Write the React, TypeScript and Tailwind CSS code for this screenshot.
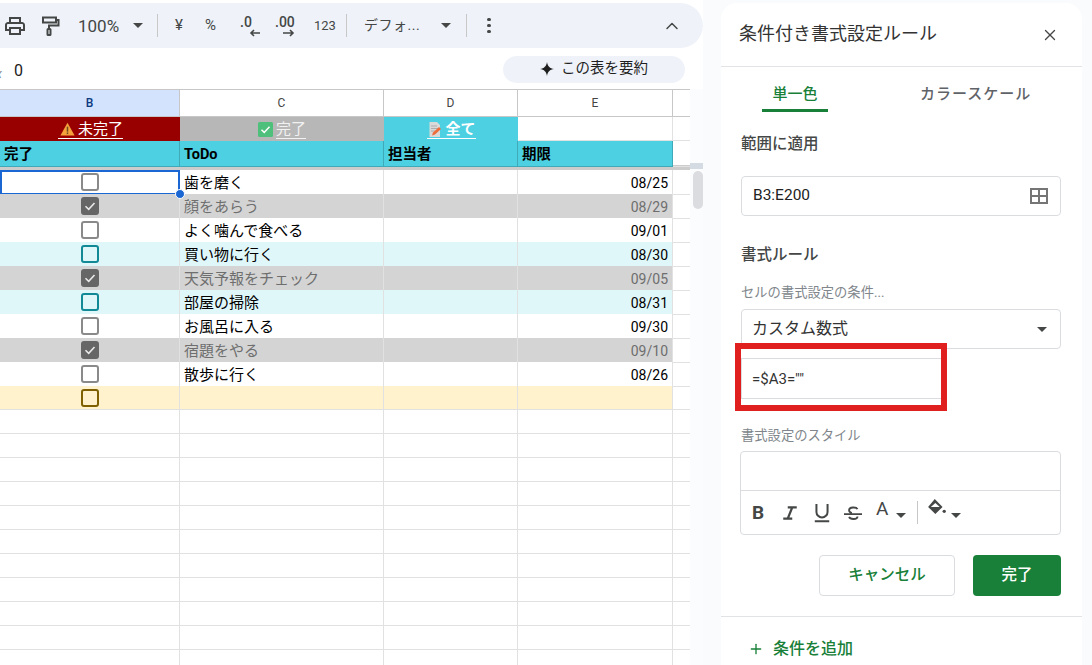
import { ChevronUp, Plus, X } from "lucide-react";

const FONT = "font-['Roboto','Noto_Sans_CJK_JP',sans-serif]";

type Tone = "white" | "done" | "soon" | "empty";

interface Task {
  text: string;
  date: string;
  tone: Tone;
}

const tasks: Task[] = [
  { text: "歯を磨く", date: "08/25", tone: "white" },
  { text: "顔をあらう", date: "08/29", tone: "done" },
  { text: "よく噛んで食べる", date: "09/01", tone: "white" },
  { text: "買い物に行く", date: "08/30", tone: "soon" },
  { text: "天気予報をチェック", date: "09/05", tone: "done" },
  { text: "部屋の掃除", date: "08/31", tone: "soon" },
  { text: "お風呂に入る", date: "09/30", tone: "white" },
  { text: "宿題をやる", date: "09/10", tone: "done" },
  { text: "散歩に行く", date: "08/26", tone: "white" },
  { text: "", date: "", tone: "empty" },
];

const toneBg: Record<Tone, string> = {
  white: "bg-white text-black",
  done: "bg-[#d4d4d4] text-[#6e6e6e]",
  soon: "bg-[#e0f7fa] text-black",
  empty: "bg-[#fff2cc] text-black",
};

const toneBox: Record<Tone, string> = {
  white: "border-[#8a8a8a]",
  done: "border-[#666666] bg-[#666666]",
  soon: "border-[#128a96]",
  empty: "border-[#7f6000]",
};

const Caret = ({ className = "" }: { className?: string }) => (
  <span className={`inline-block h-0 w-0 border-x-[5px] border-t-[5px] border-x-transparent border-t-[#444746] ${className}`} />
);

const Sep = ({ className = "" }: { className?: string }) => <span className={`h-[23px] w-px shrink-0 bg-[#c7c7c7] ${className}`} />;

const TaskBox = ({ tone }: { tone: Tone }) => (
  <span className={`flex h-[18px] w-[18px] items-center justify-center rounded-[3px] border-2 ${toneBox[tone]}`}>
    {tone === "done" && (
      <svg viewBox="0 0 14 14" className="h-[14px] w-[14px]" fill="none" stroke="#e8e8e8" strokeWidth="1.6">
        <path d="M2.5 7.2 5.7 10.3 11.5 4" />
      </svg>
    )}
  </span>
);

const Warning = () => (
  <svg viewBox="0 0 16 15" className="h-[14px] w-[15px] shrink-0">
    <path d="M8 .8 15.6 14.4H.4z" fill="#f5a13c" />
    <rect x="7.2" y="5" width="1.6" height="5.4" fill="#6b4a22" />
    <rect x="7.2" y="11.2" width="1.6" height="1.8" fill="#6b4a22" />
  </svg>
);

const CheckMark = () => (
  <svg viewBox="0 0 15 15" className="h-[15px] w-[15px] shrink-0">
    <rect width="15" height="15" rx="1.5" fill="#4fbf7c" />
    <path d="M3.5 7.8 6.2 10.4 11.5 4.8" fill="none" stroke="#fff" strokeWidth="1.5" />
  </svg>
);

const Memo = () => (
  <svg viewBox="0 0 15 15" className="h-[15px] w-[15px] shrink-0">
    <path d="M2.5 0H10l3 3v12H2.5z" fill="#d9d9d9" />
    <path d="M4 4h6M4 6.5h7M4 9h4" stroke="#a8a8a8" strokeWidth="0.9" />
    <path d="M5 13.5 6 10.5 12 5l2 2-6 5.5z" fill="#ee6c3a" />
  </svg>
);

const Toolbar = () => (
  <div className="flex h-[45px] items-center rounded-r-[24px] bg-[#eff3f9] text-[#444746]">
    <svg viewBox="0 0 24 24" className="ml-[3px] h-6 w-6 shrink-0" fill="#444746">
      <path d="M19 8h-1V3H6v5H5c-1.66 0-3 1.34-3 3v6h4v4h12v-4h4v-6c0-1.66-1.34-3-3-3zM8 5h8v3H8V5zm8 12v2H8v-4h8v2zm2-2v-2H6v2H4v-4c0-.55.45-1 1-1h14c.55 0 1 .45 1 1v4h-2z" />
    </svg>
    <svg viewBox="0 0 24 24" className="ml-[11px] h-6 w-6 shrink-0" fill="none" stroke="#444746" strokeWidth="2">
      <path d="M5 3.5h13v5H5zM18 6h2.5v5.5H11V15" />
      <rect x="9.5" y="15" width="3" height="6" rx="0.6" />
    </svg>
    <span className="ml-[16px] mt-[2px] w-[44px] shrink-0 text-[17px]">100%</span>
    <Caret className="ml-[11px]" />
    <Sep className="ml-[14px]" />
    <span className="ml-[17px] w-[10px] text-[15px]">¥</span>
    <span className="ml-[20px] w-[16px] text-[15px]">%</span>
    <svg viewBox="0 -6 24 32" className="ml-[18px] h-[32px] w-[24px] shrink-0">
      <text x="1" y="11" fontSize="14" fontWeight="500" fill="#444746">.0</text>
      <path d="M21 17h-9M15 14l-3 3 3 3" fill="none" stroke="#444746" strokeWidth="1.6" />
    </svg>
    <svg viewBox="0 -6 26 32" className="ml-[12px] h-[32px] w-[26px] shrink-0">
      <text x="0" y="11" fontSize="14" fontWeight="500" fill="#444746">.00</text>
      <path d="M8 17h10M15 14l3 3-3 3" fill="none" stroke="#444746" strokeWidth="1.6" />
    </svg>
    <span className="ml-[13px] w-[20px] text-[13px]">123</span>
    <Sep className="ml-[12px]" />
    <span className="ml-[17px] w-[62px] text-[14px] tracking-[0.5px]">デフォ...</span>
    <Caret className="ml-[15px]" />
    <Sep className="ml-[15px]" />
    <span className="ml-[20px] flex w-[4px] flex-col gap-[2.5px]">
      <i className="h-[3.5px] w-[3.5px] rounded-full bg-[#444746]" />
      <i className="h-[3.5px] w-[3.5px] rounded-full bg-[#444746]" />
      <i className="h-[3.5px] w-[3.5px] rounded-full bg-[#444746]" />
    </span>
    <ChevronUp size={20} strokeWidth={1.8} className="ml-[171px] shrink-0" />
  </div>
);

const FormulaBar = () => (
  <div className="flex h-[41px] items-center bg-white">
    <span className="ml-[-4px] mt-[11px] w-[8px] text-[12px] italic text-[#80868b]">x</span>
    <span className="ml-[10px] mt-[4px] w-[10px] text-[16px] text-[#222]">0</span>
    <button className="mt-[1px] ml-[479px] flex h-[27px] w-[182px] items-center justify-center gap-[7px] rounded-full bg-[#eff3f9] text-[14.5px] text-[#1f1f1f]">
      <svg viewBox="0 0 14 14" className="h-[14px] w-[14px]" fill="#1f1f1f">
        <path d="M7 0C7.6 4.2 9.8 6.4 14 7 9.8 7.6 7.6 9.8 7 14 6.400 9.8 4.2 7.6 0 7 4.2 6.4 6.4 4.2 7 0z" />
      </svg>
      この表を要約
    </button>
  </div>
);

const COLS = "grid-cols-[180px_204px_134px_155px_17px]";

const Sheet = () => {
  const blankRows = Array.from({ length: 11 });
  return (
    <div className="flex h-[576px] items-stretch">
      <div className="w-[690px] shrink-0 border-t border-[#c7c7c7]">
        <div className={`grid ${COLS} h-[27px] text-[12px] text-[#444]`}>
          <div className="flex items-center justify-center border-r border-b border-[#c7c7c7] bg-[#d3e3fd] font-medium text-[#0b3a80]">B</div>
          <div className="flex items-center justify-center border-r border-b border-[#c7c7c7]">C</div>
          <div className="flex items-center justify-center border-r border-b border-[#c7c7c7]">D</div>
          <div className="flex items-center justify-center border-r border-b border-[#c7c7c7]">E</div>
          <div className="border-b border-[#c7c7c7]" />
        </div>
        <div className={`grid ${COLS} h-[24px] text-[15px] leading-[18px]`}>
          <div className="flex items-center justify-center bg-[#980000] pl-[1px] pt-[1px] text-white">
            <span className="flex items-center border-b border-white pl-[2px]">
              <Warning />
              <span className="ml-[3px]">未完了</span>
            </span>
          </div>
          <div className="flex items-center justify-center bg-[#b7b7b7] pt-[1px] text-[#f1f1f1]">
            <CheckMark />
            <span className="ml-[3px] border-b border-[#f1f1f1]">完了</span>
          </div>
          <div className="flex items-center justify-center bg-[#4dd0e1] pl-[1px] pt-[1px] font-bold text-white">
            <span className="flex items-center border-b border-white">
              <Memo />
              <span className="ml-[3px]">全て</span>
            </span>
          </div>
          <div className="border-r border-b border-[#e1e1e1]" />
          <div className="border-b border-[#e1e1e1]" />
        </div>
        <div className={`grid ${COLS} h-[24px] text-[14.5px] font-bold text-black`}>
          {["完了", "ToDo", "担当者", "期限"].map((title) => (
            <div key={title} className="flex items-center border-r border-b border-[#40a9b8] bg-[#4dd0e1] pl-[4px] pt-[3px]">
              {title}
            </div>
          ))}
          <div className="border-b border-[#e1e1e1]" />
        </div>
        <div className="h-[5px] bg-[#cccccc]" />
        <div className="relative">
          {tasks.map((task, i) => (
            <div key={i} className={`grid ${COLS} h-[24px] text-[15px]`}>
              <div className={`flex items-center justify-center border-r border-b border-[#e1e1e1] ${toneBg[task.tone]} ${i === 0 ? "outline-2 outline-offset-[-2px] outline-[#1a66d2]" : ""}`}>
                <TaskBox tone={task.tone} />
              </div>
              <div className={`flex items-center overflow-hidden border-r border-b border-[#e1e1e1] pl-[4px] pt-[2px] ${toneBg[task.tone]}`}>{task.text}</div>
              <div className={`border-r border-b border-[#e1e1e1] ${toneBg[task.tone]}`} />
              <div className={`flex items-center justify-end border-r border-b border-[#e1e1e1] pr-[4px] pt-[3px] text-[14px] ${toneBg[task.tone]}`}>{task.date}</div>
              <div className="border-b border-[#e1e1e1]" />
            </div>
          ))}
          {blankRows.map((_, i) => (
            <div key={i} className={`grid ${COLS} h-[24px]`}>
              <div className="border-r border-b border-[#e1e1e1]" />
              <div className="border-r border-b border-[#e1e1e1]" />
              <div className="border-r border-b border-[#e1e1e1]" />
              <div className="border-r border-b border-[#e1e1e1]" />
              <div className="border-b border-[#e1e1e1]" />
            </div>
          ))}
          <span className="absolute left-[175px] top-[19px] h-[10px] w-[10px] rounded-full border border-white bg-[#1a66d2]" />
        </div>
      </div>
      <div className="w-[13px] shrink-0 bg-[#fbfcfe]">
        <div className="mt-[74px] h-[6px] bg-[#d5dbe3]" />
        <div className="ml-[3px] mt-[2px] h-[38px] w-[10px] rounded-[5px] bg-[#dadce0]" />
      </div>
    </div>
  );
};

const FieldLabel = ({ children, className = "" }: { children: string; className?: string }) => (
  <div className={`text-[15.5px] font-medium leading-[20px] text-[#444746] ${className}`}>{children}</div>
);

const SmallLabel = ({ children, className = "" }: { children: string; className?: string }) => (
  <div className={`text-[13.3px] leading-[16px] text-[#80868b] ${className}`}>{children}</div>
);

const StyleTools = () => (
  <div className="flex h-[44px] items-center text-[#444746]">
    <span className="ml-[11px] w-[14px] text-[19px] font-bold">B</span>
    <svg viewBox="0 0 16 16" className="ml-[15px] h-[18px] w-[18px]" fill="none" stroke="#444746" strokeWidth="2">
      <path d="M6 3h8M2 13h8M10 3 6 13" />
    </svg>
    <svg viewBox="0 0 16 18" className="ml-[14px] h-[20px] w-[18px]" fill="none" stroke="#444746" strokeWidth="1.8">
      <path d="M3 1v7a5 5 0 0 0 10 0V1M1.500 16.500h13" />
    </svg>
    <svg viewBox="0 0 16 16" className="ml-[13px] h-[18px] w-[18px]" fill="none" stroke="#444746" strokeWidth="1.600">
      <path d="M0 9h16M12 4.500C11 2.500 4.500 2.500 4.500 5.500c0 1.500 1 2 2.500 2.500M12 11c0 3-6.500 3-7.500.500" />
    </svg>
    <span className="mb-[8px] ml-[14px] w-[14px] text-[19px]">A</span>
    <Caret className="ml-[6px] mt-[4px]" />
    <Sep className="ml-[11px] mb-[1px]" />
    <svg viewBox="0 0 18 16" className="mb-[10px] ml-[9px] h-[18px] w-[20px]" fill="#444746">
      <path d="M7 0 8.500 1.500 14 7 7.500 13.500 1 7zM7.500 3.500 3.500 7h8z" />
      <circle cx="15.500" cy="11" r="1.500" />
    </svg>
    <Caret className="ml-[4px] mt-[4px]" />
  </div>
);

const RulePanel = () => (
  <aside className="relative ml-[18px] mt-[3px] h-[662px] w-[361px] shrink-0 overflow-hidden rounded-t-[16px] bg-white">
    <div className="flex h-[64px] items-center justify-between border-b border-[#e1e3e6] pl-[18px] pr-[23px]">
      <h1 className="mt-[-3px] text-[18px] font-normal text-[#333]">条件付き書式設定ルール</h1>
      <X size={18} strokeWidth={1.8} className="text-[#444746]" />
    </div>
    <div className="ml-[41px] mt-[14px] flex h-[31px] items-start text-[15px] font-medium">
      <div className="flex h-[31px] w-[66px] flex-col items-center border-b-[3px] border-[#188038] leading-[26px] text-[#188038]">単一色</div>
      <div className="ml-[92px] leading-[26px] tracking-[1px] text-[#5f6368]">カラースケール</div>
    </div>
    <div className="pl-[20px] pr-[21px]">
      <FieldLabel className="mt-[22px]">範囲に適用</FieldLabel>
      <div className="mt-[22px] flex h-[40px] items-center justify-between rounded-[4px] border border-[#dadce0] pl-[11px] pr-[12px] text-[15.500px] text-[#222]">
        B3:E200
        <svg viewBox="0 0 18 16" className="h-4 w-[18px]" fill="none" stroke="#757575" strokeWidth="2">
          <rect x="1" y="1" width="16" height="14" />
          <path d="M9 1v14M1 8h16" />
        </svg>
      </div>
      <FieldLabel className="mt-[29px]">書式ルール</FieldLabel>
      <SmallLabel className="mt-[20px]">セルの書式設定の条件...</SmallLabel>
      <div className="mt-[8px] flex h-[40px] items-center justify-between rounded-[4px] border border-[#dadce0] pl-[10px] pr-[13px] text-[16px] text-[#333]">
        カスタム数式
        <Caret />
      </div>
      <div className="mt-[9px] flex h-[41px] w-[201px] items-center border-y border-l border-[#dadce0] pl-[10px] pt-[1px] text-[15px] text-[#333]">=$A3=""</div>
      <SmallLabel className="mt-[29px]">書式設定のスタイル</SmallLabel>
      <div className="ml-[-1px] mt-[7px] h-[84px] rounded-[4px] border border-[#dadce0]">
        <div className="h-[39px] border-b border-[#dadce0]" />
        <StyleTools />
      </div>
      <div className="mt-[20px] flex justify-end gap-[18px] text-[15.500px] font-medium">
        <button className="h-[41px] w-[136px] rounded-[4px] border border-[#dadce0] text-[#188038]">キャンセル</button>
        <button className="h-[41px] w-[88px] rounded-[4px] bg-[#188038] text-white">完了</button>
      </div>
    </div>
    <div className="mt-[20px] flex h-[64px] items-center border-t border-[#e1e3e6] pl-[27px] text-[16px] font-medium text-[#188038]">
      <Plus size={16} strokeWidth={2} />
      <span className="ml-[9px]">条件を追加</span>
    </div>
    <div className="absolute left-[14px] top-[340px] h-[68px] w-[212px] border-[6px] border-[#e0201f]" />
  </aside>
);

export default function App() {
  return (
    <div className={`flex h-[665px] w-[1092px] overflow-hidden bg-[#f9fbfd] ${FONT}`}>
      <main className="w-[703px] shrink-0 overflow-hidden bg-white pt-[3px]">
        <Toolbar />
        <FormulaBar />
        <Sheet />
      </main>
      <RulePanel />
    </div>
  );
}
